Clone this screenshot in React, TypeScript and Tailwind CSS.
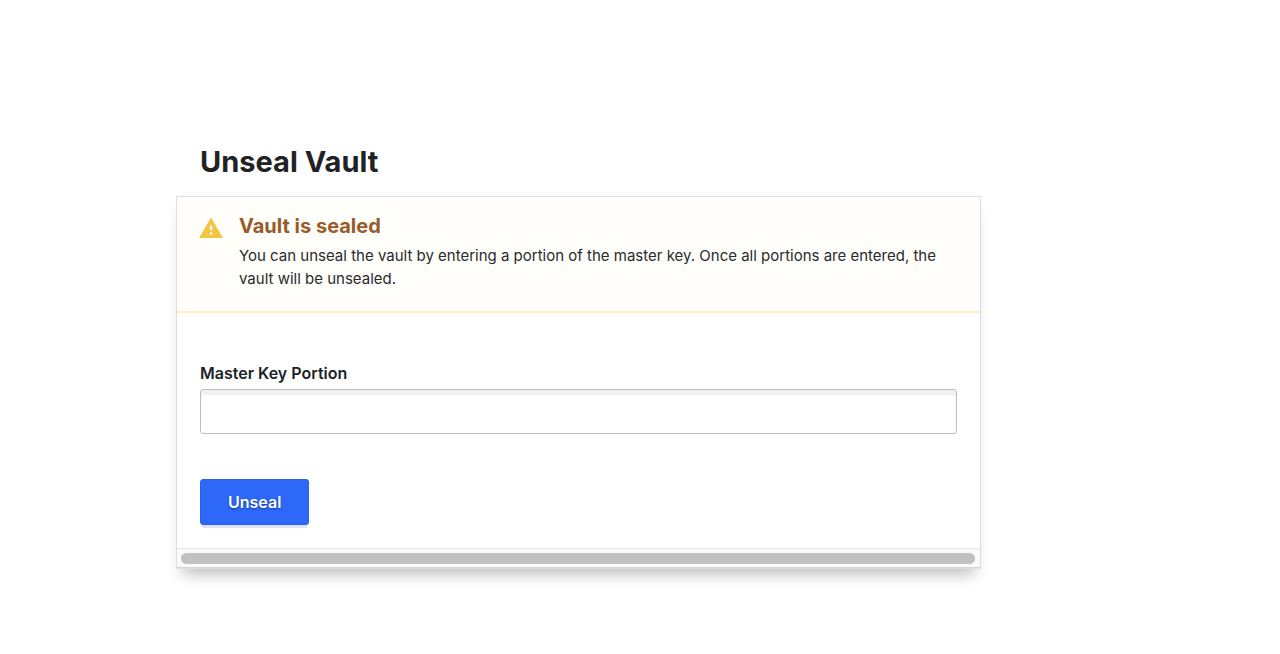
import { useState } from "react";

function WarningIcon() {
  return (
    <svg viewBox="0 0 24 21" className="mt-2 h-[21px] w-6 shrink-0" aria-hidden="true">
      <path fill="#f2c643" fillRule="evenodd" d="M0 21 12 0.5 24 21ZM10.9 8.8v4.5h2.3V8.8ZM10.9 15.5v2.3h2.3v-2.3Z" />
    </svg>
  );
}

function SealedNotice() {
  return (
    <div className="flex gap-4 border-b-2 border-[#fbf0c4] bg-[#fffefa] px-[22px] pt-3 pb-[21px]" role="status">
      <WarningIcon />
      <div className="text-[#2a2b2e]">
        <h2 className="text-[20px] leading-[35px] font-bold text-[#975b2c]">Vault is sealed</h2>
        <p className="text-[15px] leading-[23px]">
          You can unseal the vault by entering a portion of the master key. Once all portions are entered, the vault will
          be unsealed.
        </p>
      </div>
    </div>
  );
}

export default function App() {
  const [keyPortion, setKeyPortion] = useState("");

  return (
    <main className="min-h-screen bg-white pt-36 pr-4 pb-16 pl-44 font-['Inter','Liberation_Sans',sans-serif] text-[#202226]">
      <div className="max-w-[805px]">
        <h1 className="mb-4 px-6 text-[29px] leading-9 font-bold">Unseal Vault</h1>
        <section className="border border-[#dddee1] bg-white shadow-[0_14px_14px_-8px_#00000038,0_5px_12px_#0000000a]">
          <SealedNotice />
          <form className="px-[23px] pt-12 pb-[23px]" onSubmit={(event) => event.preventDefault()}>
            <label htmlFor="master-key" className="block text-[16px] leading-6 font-semibold">
              Master Key Portion
            </label>
            <input
              id="master-key"
              type="password"
              autoComplete="off"
              value={keyPortion}
              onChange={(event) => setKeyPortion(event.target.value)}
              className="mt-1 block h-[45px] w-full rounded-[3px] border border-[#babfc6] bg-white px-3 shadow-[inset_0_5px_0_#f0f0f1]"
            />
            <button
              type="submit"
              className="mt-[45px] block h-[46px] rounded-[3px] border border-[#2962ef] bg-[#2d68f8] px-[27px] text-[16px] font-semibold text-white shadow-[0_5px_1px_-2px_#dbe2f5] text-shadow-[0_1px_2px_#12389c]"
            >
              Unseal
            </button>
          </form>
          <div className="border-t border-b border-t-[#e3e3e3] border-b-[#d5d5d5] bg-[#fafafa] px-1 pt-1 pb-[3px]">
            <div className="mr-px h-[11px] rounded-full bg-[#c1c1c1]" />
          </div>
        </section>
      </div>
    </main>
  );
}
